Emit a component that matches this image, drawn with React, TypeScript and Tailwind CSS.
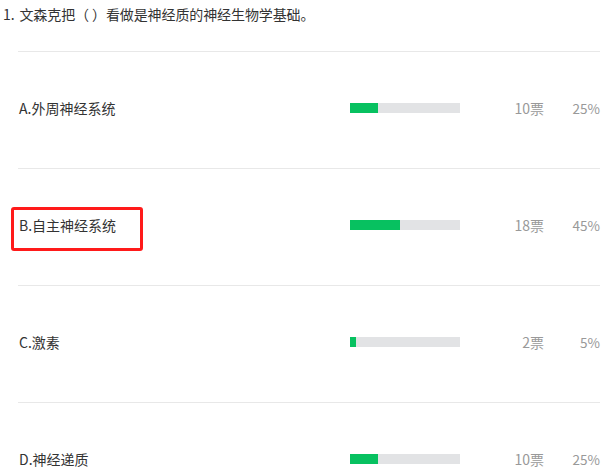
import React from 'react';

const options = [
  { label: 'A.外周神经系统', votes: 10, pct: 25 },
  { label: 'B.自主神经系统', votes: 18, pct: 45, marked: true },
  { label: 'C.激素', votes: 2, pct: 5 },
  { label: 'D.神经递质', votes: 10, pct: 25 },
];

export default function App() {
  return (
    <div
      className="relative w-[608px] h-[473px] overflow-hidden bg-white text-[14px] text-[#333]"
      style={{ fontFamily: '"Noto Sans CJK SC", "Noto Sans", sans-serif' }}
    >
      {/* Question title */}
      <div className="pl-[3px] pt-[5px] h-[51px] leading-[18px] tracking-[-0.1px]">
        <span className="mr-[5px]">1.</span>文森克把（ ）看做是神经质的神经生物学基础。
      </div>

      {/* Options with vote bars */}
      <div className="ml-[18px] mr-[8px]">
        {options.map((o) => (
          <div key={o.label} className="relative flex items-center h-[117px] border-t border-[#e8e8e8] pb-[4px]">
            <div className="w-[332px] pl-[1px]">{o.label}</div>
            <div className="w-[110px] h-[10px] bg-[#e2e3e5]">
              <div className="h-full bg-[#07c160]" style={{ width: `${o.pct}%` }} />
            </div>
            <div className="w-[84px] text-right text-[#999]">{o.votes}票</div>
            <div className="w-[56px] text-right text-[#999] text-[13.5px]">{o.pct}%</div>
            {o.marked && (
              <div className="absolute left-[-7px] top-[38px] w-[132px] h-[44px] rounded-[3px] border-[3px] border-[#ff1a1a]" />
            )}
          </div>
        ))}
      </div>
    </div>
  );
}
